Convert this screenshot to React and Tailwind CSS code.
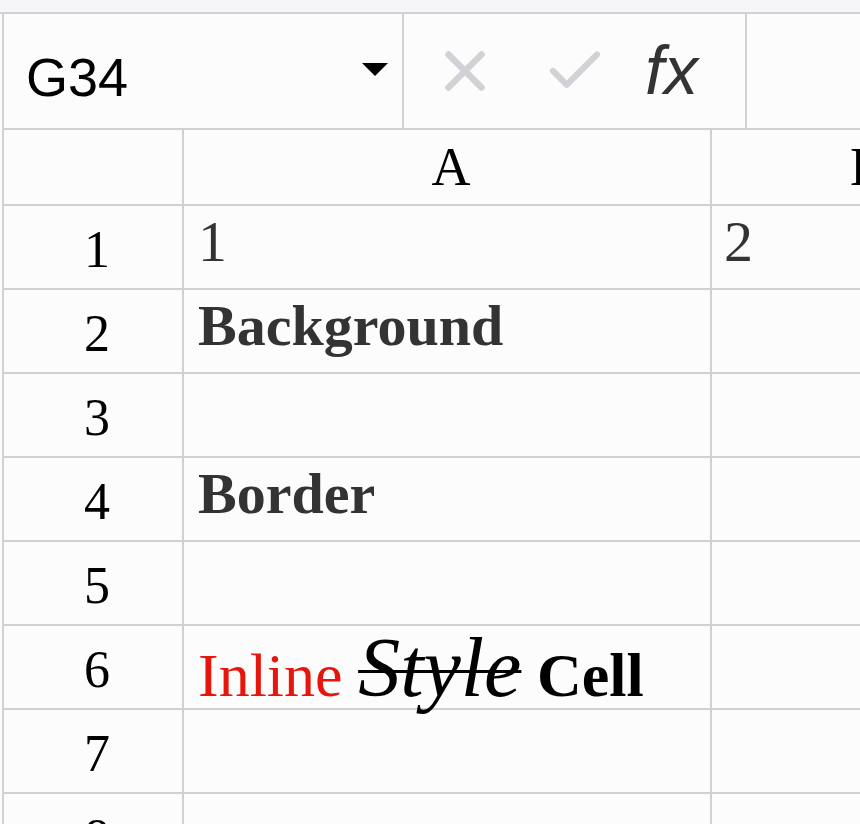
import { X, Check } from 'lucide-react';

const rows = [
  { n: 1, a: <span className="text-[#333]">1</span>, b: <span className="text-[#333]">2</span> },
  { n: 2, a: <span className="font-bold text-[#333]">Background</span> },
  { n: 3 },
  { n: 4, a: <span className="font-bold text-[#333]">Border</span> },
  { n: 5 },
  {
    n: 6,
    tall: true,
    a: (
      <span className="whitespace-nowrap text-[62px]">
        <span className="text-[#e5170d]">Inline</span>{' '}
        <span className="italic line-through decoration-[3px] text-[84px] text-black">Style</span>{' '}
        <span className="font-bold text-black">Cell</span>
      </span>
    ),
  },
  { n: 7 },
  { n: 8 },
];

const serif = "font-['Liberation_Serif','Times_New_Roman',serif]";

export default function App() {
  return (
    <div className="w-[860px] h-[824px] overflow-hidden bg-[#fcfcfd]">
      {/* top strip */}
      <div className="h-[14px] bg-[#f6f6f8] border-b-2 border-[#d0d0d5]" />

      <div className="ml-[2px] border-l-2 border-[#d0d0d5]">
        {/* formula bar */}
        <div className="flex h-[116px] border-b-2 border-[#d0d0d5]">
          <div className="w-[400px] shrink-0 flex items-center justify-between pl-[22px] pr-[14px] border-r-2 border-[#d0d0d5]">
            <span className="font-['Liberation_Sans',Arial,sans-serif] text-[54px] leading-none text-black mt-[12px]">
              G34
            </span>
            <span className="w-0 h-0 border-l-[13px] border-r-[13px] border-t-[13px] border-l-transparent border-r-transparent border-t-black -mt-[4px]" />
          </div>
          <div className="w-[343px] shrink-0 flex items-center border-r-2 border-[#d0d0d5]">
            <X className="ml-[28px] w-[66px] h-[66px] text-[#d2d2d6]" strokeWidth={2.4} />
            <Check className="ml-[44px] w-[66px] h-[66px] text-[#d2d2d6]" strokeWidth={2.2} />
            <span className="ml-[37px] font-['Liberation_Sans',Arial,sans-serif] italic text-[68px] leading-none text-[#333] -mt-[2px]">
              fx
            </span>
          </div>
          <div className="flex-1" />
        </div>

        {/* column header */}
        <div className={`flex h-[76px] border-b-2 border-[#d0d0d5] ${serif}`}>
          <div className="w-[180px] shrink-0 border-r-2 border-[#d0d0d5]" />
          <div className="w-[528px] shrink-0 flex items-center justify-center border-r-2 border-[#d0d0d5] text-[54px] text-black pl-[8px]">
            A
          </div>
          <div className="w-[312px] shrink-0 flex items-center justify-center text-[54px] text-black">
            B
          </div>
        </div>

        {/* rows */}
        {rows.map((r) => (
          <div key={r.n} className={`flex h-[84px] border-b-2 border-[#d0d0d5] ${serif}`}>
            <div className="w-[180px] shrink-0 flex items-center justify-center border-r-2 border-[#d0d0d5] text-[52px] text-black pt-[6px] pl-[8px]">
              {r.n}
            </div>
            <div
              className={`w-[528px] shrink-0 border-r-2 border-[#d0d0d5] pl-[14px] text-[58px] ${
                r.tall ? 'leading-[80px] pt-[2px]' : 'leading-[66px] pt-[3px]'
              }`}
            >
              {r.a}
            </div>
            <div className="w-[312px] shrink-0 pl-[12px] pt-[3px] text-[58px] leading-[66px]">{r.b}</div>
          </div>
        ))}
      </div>
    </div>
  );
}
